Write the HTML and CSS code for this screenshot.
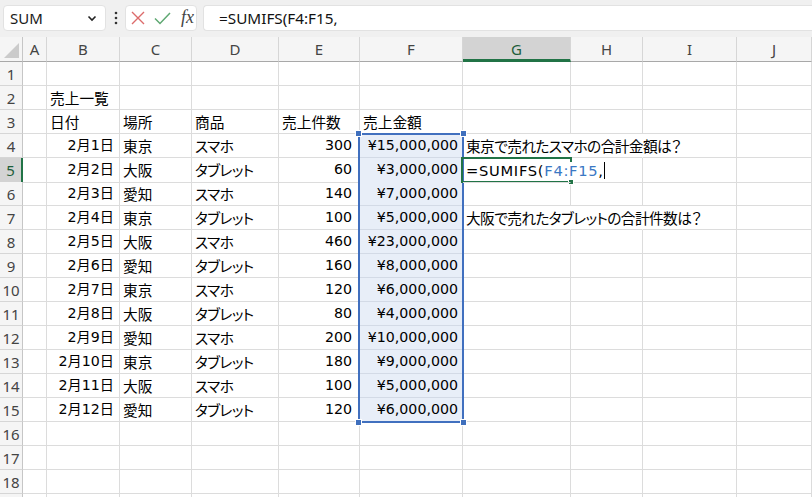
FILE: index.html
```html
<!DOCTYPE html>
<html lang="ja">
<head>
<meta charset="utf-8">
<title>Excel SUMIFS</title>
<link rel="stylesheet" href="styles.css">
</head>
<body>
<div class="toolbar">
  <div class="namebox"><span>SUM</span><svg class="chev" width="10" height="7" viewBox="0 0 10 7"><path d="M1.5 1.5 L5 5 L8.5 1.5" fill="none" stroke="#222" stroke-width="1.6"/></svg></div>
  <div class="dots"><svg width="4" height="14" viewBox="0 0 4 14"><circle cx="2" cy="2" r="1.3" fill="#333"/><circle cx="2" cy="7" r="1.3" fill="#333"/><circle cx="2" cy="12" r="1.3" fill="#333"/></svg></div>
  <div class="fxbox">
    <svg class="ico" width="14" height="14" viewBox="0 0 14 14"><path d="M1 1 L13 13 M13 1 L1 13" stroke="#dc6b6b" stroke-width="1.4" fill="none"/></svg>
    <svg class="ico" width="17" height="13" viewBox="0 0 17 13"><path d="M1 6.5 L6 11.5 L16 1" stroke="#5fa872" stroke-width="1.5" fill="none"/></svg>
    <span class="fx">fx</span>
  </div>
  <div class="formula">=SUMIFS(F4:F15,</div>
</div>

<div class="sheet">
  <div class="row head">
    <div class="corner"><span class="tri"></span></div>
    <div class="ch">A</div><div class="ch">B</div><div class="ch">C</div><div class="ch">D</div><div class="ch">E</div><div class="ch">F</div><div class="ch hl">G</div><div class="ch">H</div><div class="ch">I</div><div class="ch">J</div>
  </div>

  <div class="row"><div class="rh">1</div><div class="c"></div><div class="c"></div><div class="c"></div><div class="c"></div><div class="c"></div><div class="c"></div><div class="c"></div><div class="c"></div><div class="c"></div><div class="c"></div></div>
  <div class="row"><div class="rh">2</div><div class="c"></div><div class="c">売上一覧</div><div class="c"></div><div class="c"></div><div class="c"></div><div class="c"></div><div class="c"></div><div class="c"></div><div class="c"></div><div class="c"></div></div>
  <div class="row"><div class="rh">3</div><div class="c"></div><div class="c">日付</div><div class="c">場所</div><div class="c">商品</div><div class="c">売上件数</div><div class="c">売上金額</div><div class="c"></div><div class="c"></div><div class="c"></div><div class="c"></div></div>

  <div class="row"><div class="rh">4</div><div class="c"></div><div class="c r d">2月1日</div><div class="c">東京</div><div class="c kana">スマホ</div><div class="c r n">300</div><div class="c r m sel">¥15,000,000</div><div class="c spill kana">東京で売れたスマホの合計金額は？</div><div class="c spill"></div><div class="c"></div><div class="c"></div></div>
  <div class="row"><div class="rh on">5</div><div class="c"></div><div class="c r d">2月2日</div><div class="c">大阪</div><div class="c kana">タブレット</div><div class="c r n">60</div><div class="c r m sel">¥3,000,000</div><div class="c spill edit"><span class="etext">=SUMIFS(<span class="ref">F4:F15</span>,<span class="caret"></span></span></div><div class="c"></div><div class="c"></div><div class="c"></div></div>
  <div class="row"><div class="rh">6</div><div class="c"></div><div class="c r d">2月3日</div><div class="c">愛知</div><div class="c kana">スマホ</div><div class="c r n">140</div><div class="c r m sel">¥7,000,000</div><div class="c"></div><div class="c"></div><div class="c"></div><div class="c"></div></div>
  <div class="row"><div class="rh">7</div><div class="c"></div><div class="c r d">2月4日</div><div class="c">東京</div><div class="c kana">タブレット</div><div class="c r n">100</div><div class="c r m sel">¥5,000,000</div><div class="c spill kana">大阪で売れたタブレットの合計件数は？</div><div class="c spill"></div><div class="c"></div><div class="c"></div></div>
  <div class="row"><div class="rh">8</div><div class="c"></div><div class="c r d">2月5日</div><div class="c">大阪</div><div class="c kana">スマホ</div><div class="c r n">460</div><div class="c r m sel">¥23,000,000</div><div class="c"></div><div class="c"></div><div class="c"></div><div class="c"></div></div>
  <div class="row"><div class="rh">9</div><div class="c"></div><div class="c r d">2月6日</div><div class="c">愛知</div><div class="c kana">タブレット</div><div class="c r n">160</div><div class="c r m sel">¥8,000,000</div><div class="c"></div><div class="c"></div><div class="c"></div><div class="c"></div></div>
  <div class="row"><div class="rh">10</div><div class="c"></div><div class="c r d">2月7日</div><div class="c">東京</div><div class="c kana">スマホ</div><div class="c r n">120</div><div class="c r m sel">¥6,000,000</div><div class="c"></div><div class="c"></div><div class="c"></div><div class="c"></div></div>
  <div class="row"><div class="rh">11</div><div class="c"></div><div class="c r d">2月8日</div><div class="c">大阪</div><div class="c kana">タブレット</div><div class="c r n">80</div><div class="c r m sel">¥4,000,000</div><div class="c"></div><div class="c"></div><div class="c"></div><div class="c"></div></div>
  <div class="row"><div class="rh">12</div><div class="c"></div><div class="c r d">2月9日</div><div class="c">愛知</div><div class="c kana">スマホ</div><div class="c r n">200</div><div class="c r m sel">¥10,000,000</div><div class="c"></div><div class="c"></div><div class="c"></div><div class="c"></div></div>
  <div class="row"><div class="rh">13</div><div class="c"></div><div class="c r d">2月10日</div><div class="c">東京</div><div class="c kana">タブレット</div><div class="c r n">180</div><div class="c r m sel">¥9,000,000</div><div class="c"></div><div class="c"></div><div class="c"></div><div class="c"></div></div>
  <div class="row"><div class="rh">14</div><div class="c"></div><div class="c r d">2月11日</div><div class="c">大阪</div><div class="c kana">スマホ</div><div class="c r n">100</div><div class="c r m sel">¥5,000,000</div><div class="c"></div><div class="c"></div><div class="c"></div><div class="c"></div></div>
  <div class="row"><div class="rh">15</div><div class="c"></div><div class="c r d">2月12日</div><div class="c">愛知</div><div class="c kana">タブレット</div><div class="c r n">120</div><div class="c r m sel">¥6,000,000</div><div class="c"></div><div class="c"></div><div class="c"></div><div class="c"></div></div>

  <div class="row"><div class="rh">16</div><div class="c"></div><div class="c"></div><div class="c"></div><div class="c"></div><div class="c"></div><div class="c"></div><div class="c"></div><div class="c"></div><div class="c"></div><div class="c"></div></div>
  <div class="row"><div class="rh">17</div><div class="c"></div><div class="c"></div><div class="c"></div><div class="c"></div><div class="c"></div><div class="c"></div><div class="c"></div><div class="c"></div><div class="c"></div><div class="c"></div></div>
  <div class="row"><div class="rh">18</div><div class="c"></div><div class="c"></div><div class="c"></div><div class="c"></div><div class="c"></div><div class="c"></div><div class="c"></div><div class="c"></div><div class="c"></div><div class="c"></div></div>
  <div class="row"><div class="rh"></div><div class="c"></div><div class="c"></div><div class="c"></div><div class="c"></div><div class="c"></div><div class="c"></div><div class="c"></div><div class="c"></div><div class="c"></div><div class="c"></div></div>

  <div class="range">
    <span class="h tl"></span><span class="h tr"></span><span class="h bl"></span><span class="h br"></span>
  </div>
  <div class="active"><span class="fill"></span></div>
</div>
</body>
</html>
```

FILE: styles.css
```css
* { box-sizing: border-box; margin: 0; padding: 0; }

body {
  margin: 0;
  width: 812px;
  height: 497px;
  overflow: hidden;
  background: #ffffff;
  font-family: "Noto Sans CJK JP", "Noto Sans", sans-serif;
  color: #000;
}

/* ---------- formula bar ---------- */
.toolbar {
  height: 37px;
  background: #f0f0f0;
  display: flex;
  align-items: flex-start;
  padding: 5px 0 0 3px;
}

.namebox {
  width: 103px;
  height: 26px;
  background: #fff;
  border: 1px solid #e2e2e2;
  border-radius: 4px;
  display: flex;
  align-items: center;
  justify-content: space-between;
  padding: 0 8px 0 6px;
  font: 15px "Noto Sans", sans-serif;
  color: #1a1a1a;
}

.dots {
  width: 19px;
  height: 26px;
  display: flex;
  align-items: center;
  justify-content: center;
}

.fxbox {
  width: 72px;
  height: 26px;
  background: #fff;
  border: 1px solid #e2e2e2;
  border-radius: 4px;
  display: flex;
  align-items: center;
  padding: 0 0 0 5px;
  gap: 9px;
}

.fx {
  font: italic 18px "Liberation Serif", "DejaVu Serif", serif;
  color: #444;
  margin-top: -2px;
  margin-left: 1px;
}

.formula {
  flex: 1;
  height: 26px;
  margin-left: 6px;
  background: #fff;
  border: 1px solid #e2e2e2;
  border-right: none;
  border-radius: 4px 0 0 4px;
  padding-left: 15px;
  font: 15.3px "Noto Sans", sans-serif;
  line-height: 24px;
  color: #111;
  white-space: nowrap;
}

/* ---------- sheet ---------- */
.sheet {
  position: relative;
}

.row {
  display: grid;
  grid-template-columns: 23px 24px 73px 72px 87px 81px 103px 108px 72px 94px 75px;
  height: 24px;
}

.row.head {
  height: 25px;
}

.corner {
  background: #f5f5f5;
  border-right: 1px solid #c6c6c6;
  border-bottom: 1px solid #a8a8a8;
  position: relative;
}

.tri {
  position: absolute;
  right: 3px;
  bottom: 3px;
  width: 0;
  height: 0;
  border-left: 15px solid transparent;
  border-bottom: 15px solid #cbcbcb;
}

.ch {
  background: #f5f5f5;
  border-right: 1px solid #d6d6d6;
  border-bottom: 1px solid #a8a8a8;
  display: flex;
  align-items: center;
  justify-content: center;
  font: 15px "Noto Sans", sans-serif;
  color: #444;
}

.ch.hl {
  background: #d3d3d3;
  color: #1d5e3a;
  border-bottom: 3px solid #217346;
  padding-top: 2px;
}

.rh {
  background: #f5f5f5;
  border-right: 1px solid #c6c6c6;
  border-bottom: 1px solid #d6d6d6;
  display: flex;
  align-items: center;
  justify-content: center;
  font: 15px "Noto Sans", sans-serif;
  color: #444;
}

.rh.on {
  background: #d3d3d3;
  color: #1d5e3a;
  border-right: 2px solid #217346;
}

.c {
  border-right: 1px solid #dcdcdc;
  border-bottom: 1px solid #dcdcdc;
  font-size: 14.7px;
  line-height: 23px;
  padding-left: 3px;
  white-space: nowrap;
  overflow: visible;
  font-feature-settings: "palt";
}

.c.kana {
  letter-spacing: -0.6px;
}

.c.r {
  text-align: right;
  padding-left: 0;
  font-family: "DejaVu Sans", "Noto Sans CJK JP", sans-serif;
  font-size: 14.2px;
  font-feature-settings: normal;
}

.c.d { padding-right: 5px; }
.c.n { padding-right: 7px; }
.c.m { padding-right: 4px; }

.c.sel {
  background: #e8eef8;
  border-bottom-color: #d3dae6;
}

.c.spill {
  border-right-color: transparent;
}

.c.edit {
  position: relative;
  z-index: 3;
}

.etext {
  background: #fff;
  padding-right: 1px;
  position: relative;
  font-family: "DejaVu Sans", sans-serif;
  letter-spacing: 0.7px;
}

.ref {
  color: #3a78c4;
}

.caret {
  display: inline-block;
  width: 1px;
  height: 17px;
  background: #000;
  vertical-align: -3px;
  margin-left: 0;
}

/* selection range F4:F15 */
.range {
  position: absolute;
  left: 358px;
  top: 96px;
  width: 106px;
  height: 290px;
  border: 2px solid #4170bf;
  pointer-events: none;
}

.h {
  position: absolute;
  width: 7px;
  height: 7px;
  background: #3f6fbd;
  border: 1px solid #fff;
}

.h.tl { left: -5px; top: -5px; }
.h.tr { right: -5px; top: -5px; }
.h.bl { left: -5px; bottom: -5px; }
.h.br { right: -5px; bottom: -5px; }

/* active cell G5 */
.active {
  position: absolute;
  left: 461px;
  top: 120px;
  width: 111px;
  height: 26px;
  border: 2px solid #217346;
  z-index: 2;
}

.fill {
  position: absolute;
  right: -4px;
  bottom: -4px;
  width: 6px;
  height: 6px;
  background: #217346;
  border: 1px solid #fff;
}
```
